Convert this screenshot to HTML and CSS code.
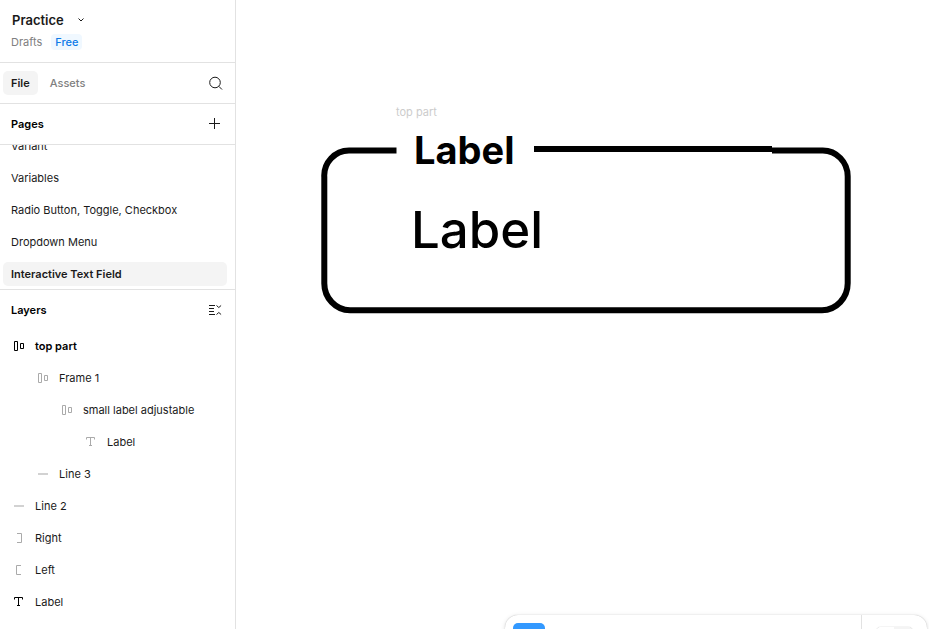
FILE: index.html
```html
<!DOCTYPE html>
<html lang="en">
<head>
    <meta charset="UTF-8">
    <meta name="viewport" content="width=device-width, initial-scale=1.0">
    <title>Practice</title>
    <link rel="stylesheet" href="styles.css">
</head>
<body>
    <aside class="sidebar">
        <header class="file-header">
            <button type="button" class="file-name">
                Practice
                <svg width="8" height="8" viewBox="0 0 8 8"><path d="M1.5 2.5 4 5l2.5-2.5"/></svg>
            </button>
            <div class="file-meta">
                <a href="#drafts" class="drafts">Drafts</a>
                <span class="badge">Free</span>
            </div>
        </header>

        <nav class="tabs">
            <button type="button" class="tab active">File</button>
            <button type="button" class="tab">Assets</button>
            <button type="button" class="icon-button" aria-label="Search">
                <svg width="16" height="16" viewBox="0 0 16 16"><circle cx="8" cy="7.5" r="5.3"/><path d="m11.800 11.300 3.200 3.200"/></svg>
            </button>
        </nav>

        <section class="pages">
            <div class="section-title">
                <h2>Pages</h2>
                <button type="button" class="icon-button" aria-label="Add page">
                    <svg width="16" height="16" viewBox="0 0 16 16"><path d="M7.5 2v11M2 7.5h11"/></svg>
                </button>
            </div>
            <div class="page-list">
                <a href="#variant" class="page">Variant</a>
                <a href="#variables" class="page">Variables</a>
                <a href="#controls" class="page">Radio Button, Toggle, Checkbox</a>
                <a href="#dropdown" class="page">Dropdown Menu</a>
                <a href="#text-field" class="page active">Interactive Text Field</a>
            </div>
        </section>

        <section class="layers">
            <div class="section-title">
                <h2>Layers</h2>
                <button type="button" class="icon-button" aria-label="Collapse layers">
                    <svg width="16" height="16" viewBox="0 0 16 16"><path d="M2 3.500h6M2 6.500h5M2 9.500h5M2 12.500h6M9.500 3.500l2.300 2 2.300-2M9.500 12.500l2.300-2 2.300 2"/></svg>
                </button>
            </div>
            <ul class="layer-list">
                <li class="layer top">
                    <svg width="16" height="16" viewBox="0 0 16 16"><path d="M3.5 3.5h3v9h-3zM9.5 5.5h3v5h-3z"/></svg>
                    top part
                </li>
                <li class="layer level-1">
                    <svg width="16" height="16" viewBox="0 0 16 16"><path d="M3.5 3.5h3v9h-3zM9.5 5.5h3v5h-3z"/></svg>
                    Frame 1
                </li>
                <li class="layer level-2">
                    <svg width="16" height="16" viewBox="0 0 16 16"><path d="M3.5 3.5h3v9h-3zM9.5 5.5h3v5h-3z"/></svg>
                    small label adjustable
                </li>
                <li class="layer level-3">
                    <svg width="16" height="16" viewBox="0 0 16 16"><path d="M3.5 5.5v-2h8v2M7.5 3.5v8M6 11.5h3"/></svg>
                    Label
                </li>
                <li class="layer level-1 line">
                    <svg width="16" height="16" viewBox="0 0 16 16"><path d="M3 8h10"/></svg>
                    Line 3
                </li>
                <li class="layer line">
                    <svg width="16" height="16" viewBox="0 0 16 16"><path d="M3 8h10"/></svg>
                    Line 2
                </li>
                <li class="layer">
                    <svg width="16" height="16" viewBox="0 0 16 16"><path d="M6 3.5h4.5v9H6"/></svg>
                    Right
                </li>
                <li class="layer">
                    <svg width="16" height="16" viewBox="0 0 16 16"><path d="M10 3.5H5.5v9H10"/></svg>
                    Left
                </li>
                <li class="layer text">
                    <svg width="16" height="16" viewBox="0 0 16 16"><path d="M3.5 5.5v-2h8v2M7.5 3.5v8M6 11.5h3"/></svg>
                    Label
                </li>
            </ul>
        </section>
    </aside>

    <main class="canvas">
        <span class="node frame-name">top part</span>
        <svg class="node field-outline" width="531" height="168" viewBox="0 0 531 168">
            <path d="M75.500 4.500H28A25 25 0 0 0 3.300 31V137A26 27 0 0 0 29 164.300H501A26 27 0 0 0 526.700 137V31A25 26 0 0 0 501 4.500H451"/>
            <path d="M213 3H451"/>
        </svg>
        <span class="node small-label">Label</span>
        <span class="node big-label">Label</span>

        <div class="toolbar">
            <div class="tools">
                <button type="button" class="tool" aria-label="Move"></button>
            </div>
            <div class="mode">
                <button type="button" class="mode-switch" aria-label="Dev Mode"></button>
            </div>
        </div>
    </main>
</body>
</html>
```
FILE: styles.css
```css
* {
    box-sizing: border-box;
}
body {
    display: flex;
    height: 100vh;
    margin: 0;
    overflow: hidden;
    font-family: Inter, sans-serif;
    font-size: 11px;
    line-height: 16px;
    color: #1a1a1a;
    background: #fff;
}
button {
    padding: 0;
    border: 0;
    background: none;
    font: inherit;
    color: inherit;
}
a {
    color: inherit;
    text-decoration: none;
}
svg {
    flex: none;
    fill: none;
    stroke: currentColor;
}

/* Sidebar */
.sidebar {
    flex: none;
    width: 236px;
    overflow: hidden;
    border-right: 1px solid #e2e2e2;
}
.file-header {
    padding: 10px 12px 12px;
    border-bottom: 1px solid #e2e2e2;
}
.file-name {
    display: flex;
    align-items: center;
    gap: 13px;
    font-size: 13px;
    font-weight: 600;
    line-height: 20px;
}
.file-meta {
    display: flex;
    gap: 9px;
    margin: 4px 0 0 -1px;
}
.drafts {
    color: #808080;
}
.badge {
    padding: 0 4px;
    border-radius: 4px;
    background: #f0f8ff;
    color: #0d7be8;
    font-weight: 500;
}
.tabs {
    display: flex;
    align-items: center;
    gap: 4px;
    padding: 8px 12px 8px 3px;
    border-bottom: 1px solid #e2e2e2;
}
.tab {
    padding: 4px 8px;
    border-radius: 5px;
    color: #808080;
    font-weight: 500;
}
.tab.active {
    background: #f4f4f4;
    color: #1a1a1a;
    font-weight: 600;
}
.icon-button {
    display: flex;
    margin-left: auto;
}
.section-title {
    display: flex;
    align-items: center;
    height: 40px;
    padding: 0 12px 0 11px;
}
.section-title h2 {
    margin: 0;
    font-size: 11px;
    font-weight: 600;
    color: #000;
}
.pages {
    border-bottom: 1px solid #e2e2e2;
}
.page-list {
    display: flex;
    flex-direction: column;
    justify-content: flex-end;
    gap: 8px;
    height: 145px;
    padding: 0 8px 3px 3px;
    overflow: hidden;
    border-top: 1px solid #e2e2e2;
}
.page {
    padding: 4px 8px;
    border-radius: 5px;
}
.page.active {
    background: #f4f4f4;
    font-weight: 600;
}
.layer-list {
    margin: 0;
    padding: 0;
    list-style: none;
}
.layer {
    display: flex;
    align-items: center;
    gap: 8px;
    height: 32px;
    padding-left: 11px;
}
.layer svg {
    color: #aaa;
}
.layer.top,
.layer.top svg,
.layer.text svg {
    color: #000;
}
.layer.top {
    font-weight: 600;
}
.layer.line svg {
    color: #d2d2d2;
    stroke-width: 2px;
}
.level-1 {
    padding-left: 35px;
}
.level-2 {
    padding-left: 59px;
}
.level-3 {
    padding-left: 83px;
}

/* Canvas */
.canvas {
    position: relative;
    flex: 1;
    overflow: hidden;
}
.node {
    position: absolute;
    color: #000;
}
.frame-name {
    left: 160px;
    top: 104px;
    color: #ccc;
}
.field-outline {
    left: 85px;
    top: 146px;
    stroke-width: 6px;
}
.small-label {
    left: 178px;
    top: 126px;
    font-size: 38px;
    font-weight: 700;
    line-height: 48px;
}
.big-label {
    left: 175px;
    top: 198px;
    font-size: 51px;
    font-weight: 500;
    line-height: 64px;
}
.toolbar {
    position: absolute;
    left: 269px;
    right: 2px;
    bottom: -34px;
    display: flex;
    height: 48px;
    border-radius: 13px;
    background: #fff;
    box-shadow: 0 0 1px rgba(0,0,0,0.3), 0 1px 5px rgba(0,0,0,0.12);
}
.tools {
    flex: 1;
    padding: 8px;
    border-right: 1px solid #e2e2e2;
}
.tool {
    display: block;
    width: 32px;
    height: 32px;
    border-radius: 5px;
    background: #3399ff;
}
.mode {
    width: 65px;
    padding: 12px 14px;
}
.mode-switch {
    display: block;
    width: 37px;
    height: 24px;
    border-radius: 5px;
    background: linear-gradient(90deg, #fff 50%, #f4f4f4 50%);
    box-shadow: 0 0 1px rgba(0,0,0,0.4);
}
```
